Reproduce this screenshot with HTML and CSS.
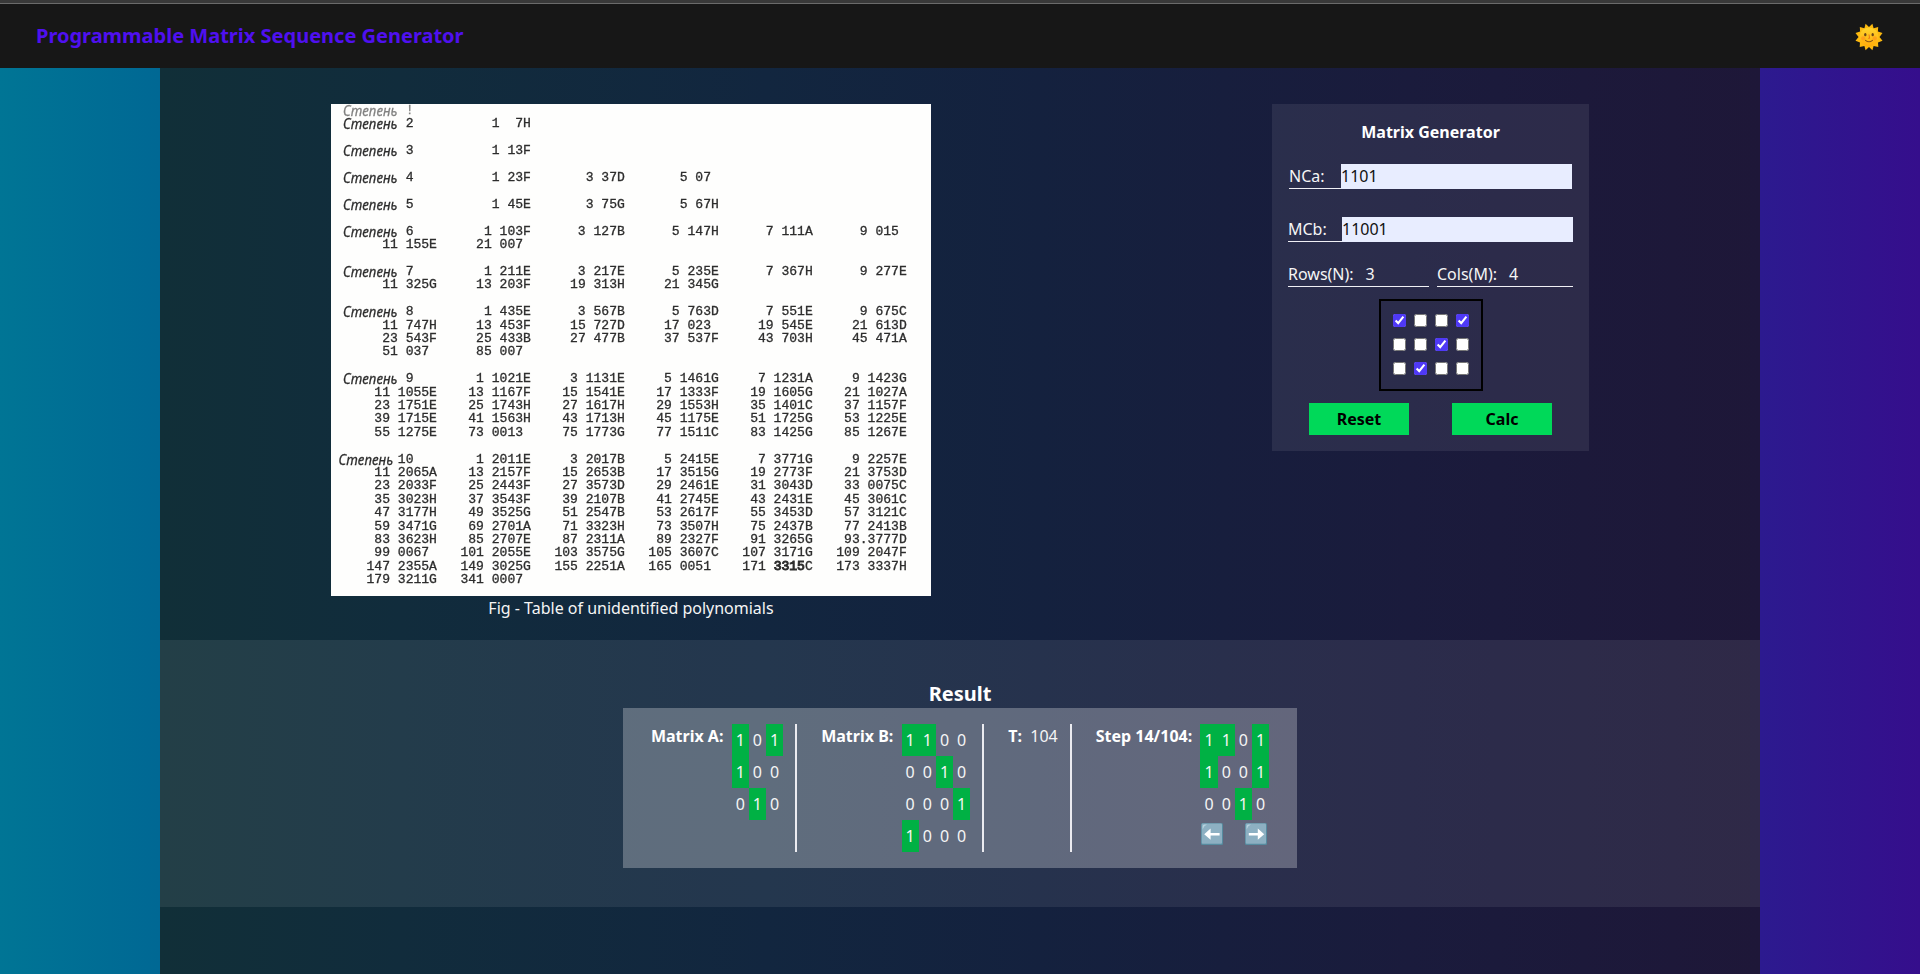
FILE: index.html
```html
<!DOCTYPE html>
<html lang="en">
<head>
<meta charset="utf-8">
<title>Programmable Matrix Sequence Generator</title>
<link rel="stylesheet" href="styles.css">
</head>
<body>
<header class="topbar">
  <h1 class="brand">Programmable Matrix Sequence Generator</h1>
  <svg class="sun" viewBox="0 0 28 28" aria-label="Light theme">
    <defs><linearGradient id="sunFill" x1="0" y1="0" x2="0" y2="1"><stop offset="0" stop-color="#ffd52e"/><stop offset="1" stop-color="#ffab0a"/></linearGradient></defs>
    <path fill="#fcb90f" d="M14 4 17.4.7 18.6 5.2 23.2 3.9 22.9 8.5 27.5 10 24.5 14 27.5 17.8 23 19.5 23.3 24.1 18.6 22.9 17.4 27.3 14 24 10.6 27.3 9.4 22.9 4.7 24.1 5 19.5.5 17.8 3.5 14 .5 10 5.1 8.5 4.8 3.9 9.4 5.2 10.6.7Z"/>
    <circle cx="14" cy="14" r="9.6" fill="url(#sunFill)"/>
    <ellipse cx="10.3" cy="11.7" rx="1.2" ry="1.6" fill="#6b4619"/>
    <ellipse cx="17.7" cy="11.7" rx="1.2" ry="1.6" fill="#6b4619"/>
    <circle cx="8.2" cy="15.3" r="2.1" fill="#ff8a1f" opacity=".55"/>
    <circle cx="19.8" cy="15.3" r="2.1" fill="#ff8a1f" opacity=".55"/>
    <path d="M14 11.5 14.6 15.3 13.2 15.3" fill="none" stroke="#ed7b16" stroke-width="1"/>
    <path d="M10.5 17.3Q14 20.3 17.5 17.3" fill="none" stroke="#8d5715" stroke-width="1.1" stroke-linecap="round"/>
  </svg>
</header>
<main class="page">
  <section class="workspace">
    <figure class="figure">
      <div class="scan">
<pre class="scan-text"><span class="faded"><i class="deg">Степень</i> !</span>
<i class="deg">Степень</i> 2          1  7H

<i class="deg">Степень</i> 3          1 13F

<i class="deg">Степень</i> 4          1 23F       3 37D       5 07

<i class="deg">Степень</i> 5          1 45E       3 75G       5 67H

<i class="deg">Степень</i> 6         1 103F      3 127B      5 147H      7 111A      9 015
     11 155E     21 007

<i class="deg">Степень</i> 7         1 211E      3 217E      5 235E      7 367H      9 277E
     11 325G     13 203F     19 313H     21 345G

<i class="deg">Степень</i> 8         1 435E      3 567B      5 763D      7 551E      9 675C
     11 747H     13 453F     15 727D     17 023      19 545E     21 613D
     23 543F     25 433B     27 477B     37 537F     43 703H     45 471A
     51 037      85 007

<i class="deg">Степень</i> 9        1 1021E     3 1131E     5 1461G     7 1231A     9 1423G
    11 1055E    13 1167F    15 1541E    17 1333F    19 1605G    21 1027A
    23 1751E    25 1743H    27 1617H    29 1553H    35 1401C    37 1157F
    39 1715E    41 1563H    43 1713H    45 1175E    51 1725G    53 1225E
    55 1275E    73 0013     75 1773G    77 1511C    83 1425G    85 1267E

<i class="deg deg-wide">Степень</i>10        1 2011E     3 2017B     5 2415E     7 3771G     9 2257E
    11 2065A    13 2157F    15 2653B    17 3515G    19 2773F    21 3753D
    23 2033F    25 2443F    27 3573D    29 2461E    31 3043D    33 0075C
    35 3023H    37 3543F    39 2107B    41 2745E    43 2431E    45 3061C
    47 3177H    49 3525G    51 2547B    53 2617F    55 3453D    57 3121C
    59 3471G    69 2701A    71 3323H    73 3507H    75 2437B    77 2413B
    83 3623H    85 2707E    87 2311A    89 2327F    91 3265G    93.3777D
    99 0067    101 2055E   103 3575G   105 3607C   107 3171G   109 2047F
   147 2355A   149 3025G   155 2251A   165 0051    171 <span class="smudge">3315</span>C   173 3337H
   179 3211G   341 0007</pre>
      </div>
      <figcaption class="caption">Fig - Table of unidentified polynomials</figcaption>
    </figure>
    <form class="generator">
      <h2 class="generator-title">Matrix Generator</h2>
      <label class="field">NCa:<input class="field-input" type="text" value="1101"></label>
      <label class="field field-b">MCb:<input class="field-input" type="text" value="11001"></label>
      <div class="sizes">
        <div class="size size-rows"><span>Rows(N):</span><span>3</span></div>
        <div class="size size-cols"><span>Cols(M):</span><span>4</span></div>
      </div>
      <div class="checks">
        <input type="checkbox" checked><input type="checkbox"><input type="checkbox"><input type="checkbox" checked>
        <input type="checkbox"><input type="checkbox"><input type="checkbox" checked><input type="checkbox">
        <input type="checkbox"><input type="checkbox" checked><input type="checkbox"><input type="checkbox">
      </div>
      <div class="actions">
        <button class="btn" type="button">Reset</button>
        <button class="btn" type="button">Calc</button>
      </div>
    </form>
  </section>
  <section class="result">
    <h2 class="result-title">Result</h2>
    <div class="panel">
      <div class="cell">
        <strong>Matrix A:</strong>
        <div class="matrix">
          <div class="row"><span class="on">1</span><span>0</span><span class="on">1</span></div>
          <div class="row"><span class="on">1</span><span>0</span><span>0</span></div>
          <div class="row"><span>0</span><span class="on">1</span><span>0</span></div>
        </div>
      </div>
      <div class="cell">
        <strong>Matrix B:</strong>
        <div class="matrix">
          <div class="row"><span class="on">1</span><span class="on">1</span><span>0</span><span>0</span></div>
          <div class="row"><span>0</span><span>0</span><span class="on">1</span><span>0</span></div>
          <div class="row"><span>0</span><span>0</span><span>0</span><span class="on">1</span></div>
          <div class="row"><span class="on">1</span><span>0</span><span>0</span><span>0</span></div>
        </div>
      </div>
      <div class="cell"><strong>T:</strong><span>104</span></div>
      <div class="cell">
        <strong>Step 14/104:</strong>
        <div class="matrix">
          <div class="row"><span class="on">1</span><span class="on">1</span><span>0</span><span class="on">1</span></div>
          <div class="row"><span class="on">1</span><span>0</span><span>0</span><span class="on">1</span></div>
          <div class="row"><span>0</span><span>0</span><span class="on">1</span><span>0</span></div>
          <div class="arrows">
            <svg class="arrow" viewBox="0 0 22 22"><rect width="22" height="22" rx="1.5" fill="#568b9f"/><rect x=".7" y=".5" width="20.3" height="20.3" rx="1" fill="#8db0c2"/><path d="M1.6 6.5V3.4Q1.6 1.6 3.4 1.6H6Q3 2.6 1.6 6.5Z" fill="#b5d2de"/><path d="M3.2 11.2 9.6 5.6V9.9H18.6V12.5H9.6V16.8Z" fill="#fff"/></svg>
            <svg class="arrow" viewBox="0 0 22 22"><rect width="22" height="22" rx="1.5" fill="#568b9f"/><rect x=".7" y=".5" width="20.3" height="20.3" rx="1" fill="#8db0c2"/><path d="M1.6 6.5V3.4Q1.6 1.6 3.4 1.6H6Q3 2.6 1.6 6.5Z" fill="#b5d2de"/><path d="M19.2 11.2 12.8 5.6V9.9H3.8V12.5H12.8V16.8Z" fill="#fff"/></svg>
          </div>
        </div>
      </div>
    </div>
  </section>
</main>
</body>
</html>
```

FILE: styles.css
```css
* { box-sizing: border-box; }

body {
  margin: 0;
  height: 974px;
  overflow: hidden;
  display: flex;
  flex-direction: column;
  font: 16px/24px "Noto Sans", sans-serif;
  color: #f5f5f5;
  background: linear-gradient(to right, #007595, #006894 8.3%, #2c1a8f 91.7%, #350e8c);
}

h1, h2, figure, pre { margin: 0; }

.topbar {
  flex: none;
  height: 68px;
  padding: 0 36px;
  border-top: 3px solid #393939;
  box-shadow: inset 0 1px #6b6b6b;
  background: #171717;
  display: flex;
  align-items: center;
  justify-content: space-between;
}
.brand { font-size: 20px; line-height: 28px; color: #4f10f0; }
.sun { width: 28px; height: 28px; margin: 3px 1px 0 0; }

.page {
  flex: 1;
  width: 1600px;
  margin: 0 auto;
  background: linear-gradient(to right, #112f38, #112c3c 15%, #12263f 38%, #14213e 55%, #1a1b3c 78%, #1e1738);
}

.workspace { height: 572px; padding: 36px 171px 0; display: flex; justify-content: space-between; align-items: flex-start; }
.figure { width: 600px; }
.caption { text-align: center; }
.scan { height: 492px; overflow: hidden; background: #fefefd; }
.scan-text {
  padding-left: 12px;
  font: 13.05px/13.4px "Liberation Mono", monospace;
  color: #2d2d2d;
  -webkit-text-stroke: .3px #2d2d2d;
  filter: blur(.3px);
}
.deg {
  display: inline-block;
  width: 54.8px;
  height: 13.4px;
  vertical-align: top;
  font: italic 15px/13.4px "Noto Sans", sans-serif;
  transform: scaleX(.89);
  transform-origin: left;
}
.deg-wide { text-indent: -5px; }
.faded { opacity: .6; }
.smudge { -webkit-text-stroke: 1px #2d2d2d; }

.generator { width: 317px; height: 347px; padding: 16px 16px 0; background: rgba(255, 255, 255, .08); }
.generator-title { font-size: 16px; line-height: 24px; text-align: center; color: #fff; }
.field { display: flex; justify-content: space-between; height: 25px; margin: 20px 1px 28px; border-bottom: 1px solid #f0f0f5; }
.field-b { margin: 0 0 20px; }
.field-input { width: 231px; height: 25px; border: 0; padding: 0 0 1px; background: #e8edff; color: #111; font: inherit; }
.sizes { display: flex; justify-content: space-between; }
.size { height: 25px; border-bottom: 1px solid #f0f0f5; display: flex; gap: 12px; }
.size-rows { width: 141px; }
.size-cols { width: 136px; }
.checks {
  width: 104px;
  height: 92px;
  margin: 12px auto;
  padding: 13px 12px;
  border: 2px solid #000;
  display: grid;
  grid-template-columns: repeat(4, 13px);
  grid-auto-rows: 13px;
  gap: 11px 8px;
}
.checks input { width: 13px; height: 13px; margin: 0; accent-color: #4f39f6; }
.actions { display: flex; gap: 43px; padding-left: 21px; }
.btn { width: 100px; height: 32px; border: 0; padding: 0; background: #00d959; font: bold 16px/24px "Noto Sans", sans-serif; color: #000; }

.result { height: 267px; padding-top: 40px; background: rgba(255, 255, 255, .08); display: flex; flex-direction: column; align-items: center; }
.result-title { font-size: 20px; line-height: 28px; color: #fff; }
.panel { height: 160px; width: 674px; padding: 16px 0; background: rgba(255, 255, 255, .27); display: flex; justify-content: center; }
.cell { display: flex; gap: 8.3px; padding: 0 12px 0 24px; border-right: 2px solid #ebebf0; }
.cell:first-child { padding-left: 16px; }
.cell:last-child { border: 0; padding-right: 16px; }
.cell strong { color: #fff; }
.row { display: flex; line-height: 32px; }
.row span { padding: 0 4px; }
.on { background: #00b144; }
.arrows { display: flex; justify-content: space-between; padding: 3px 2px 0 1px; }
.arrow { width: 22px; height: 22px; }
```
